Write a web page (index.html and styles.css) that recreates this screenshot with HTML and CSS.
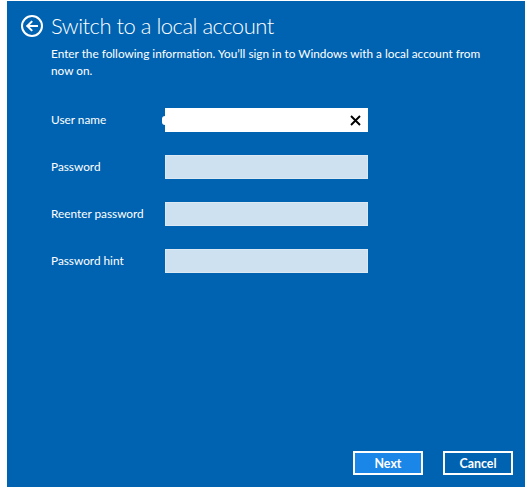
FILE: index.html
```html
<!DOCTYPE html>
<html lang="en">
<head>
<meta charset="utf-8">
<title>Switch to a local account</title>
<link rel="stylesheet" href="styles.css">
</head>
<body>
<div class="panel">
  <header class="head">
    <button class="back" type="button" aria-label="Back">
      <svg viewBox="0 0 22 22" width="22" height="22">
        <circle cx="11" cy="11" r="10" fill="none" stroke="#fff" stroke-width="2"/>
        <path d="M16 11H6.5M10.5 6.8L6.3 11l4.2 4.2" fill="none" stroke="#fff" stroke-width="2" stroke-linecap="square"/>
      </svg>
    </button>
    <h1 class="title">Switch to a local account</h1>
  </header>
  <p class="intro">Enter the following information. You’ll sign in to Windows with a local account from now on.</p>
  <div class="fields">
    <label class="label" for="user">User name</label>
    <div class="field field-active">
      <input id="user" class="input" type="text">
      <svg class="clear" viewBox="0 0 11 11" width="11" height="11">
        <path d="M1 1L10 10M10 1L1 10" stroke="#000" stroke-width="1.9"/>
      </svg>
    </div>
    <label class="label" for="pw">Password</label>
    <div class="field"><input id="pw" class="input" type="password"></div>
    <label class="label" for="pw2">Reenter password</label>
    <div class="field"><input id="pw2" class="input" type="password"></div>
    <label class="label" for="hint">Password hint</label>
    <div class="field"><input id="hint" class="input" type="text"></div>
  </div>
  <footer class="actions">
    <button class="btn btn-primary" type="button">Next</button>
    <button class="btn" type="button">Cancel</button>
  </footer>
</div>
</body>
</html>
```
FILE: styles.css
```css
html, body {
  margin: 0;
  padding: 0;
  background: #ffffff;
}
body {
  font-family: Lato, "Noto Sans", sans-serif;
  color: #ffffff;
}
.panel {
  margin: 1px 0 0 7px;
  height: 486px;
  background: #0063b1;
  display: flex;
  flex-direction: column;
  box-sizing: border-box;
  padding: 14px 12px 12px 14px;
}
.head {
  display: flex;
  align-items: center;
  gap: 8px;
  height: 22px;
}
.back {
  width: 22px;
  height: 22px;
  padding: 0;
  border: 0;
  background: none;
  display: flex;
}
.title {
  margin: 0;
  font-size: 22px;
  font-weight: 300;
  letter-spacing: -0.5px;
  line-height: 22px;
  color: #ffffff;
}
.intro {
  margin: 8px 0 0 30px;
  width: 450px;
  font-size: 11.8px;
  line-height: 17px;
}
.fields {
  margin: 29px 0 0 30px;
  display: grid;
  grid-template-columns: 114px 203px;
  grid-auto-rows: 24px;
  row-gap: 23px;
  align-items: center;
}
.label {
  font-size: 11.8px;
  line-height: 24px;
}
.field {
  height: 24px;
  box-sizing: border-box;
  display: flex;
  align-items: center;
  background: #cde1f0;
  border: 1px solid #dce9f5;
}
.field-active {
  background: #ffffff;
  border-color: #ffffff;
  padding-right: 6px;
}
.field-active::before {
  content: "";
  width: 3px;
  height: 9px;
  margin-left: -4px;
  background: #ffffff;
  border-radius: 3px 0 0 3px;
}
.input {
  flex: 1;
  min-width: 0;
  height: 100%;
  border: 0;
  padding: 0 6px;
  background: transparent;
  outline: none;
  font: inherit;
  font-size: 12px;
}
.clear {
  flex: none;
}
.actions {
  margin-top: auto;
  display: flex;
  justify-content: flex-end;
  gap: 20px;
}
.btn {
  width: 70px;
  height: 24px;
  box-sizing: border-box;
  border: 2px solid #ffffff;
  background: transparent;
  color: #ffffff;
  font-family: Lato, "Noto Sans", sans-serif;
  font-size: 12.4px;
  font-weight: 700;
  padding: 0;
}
.btn-primary {
  background: #1a86e8;
}
```
